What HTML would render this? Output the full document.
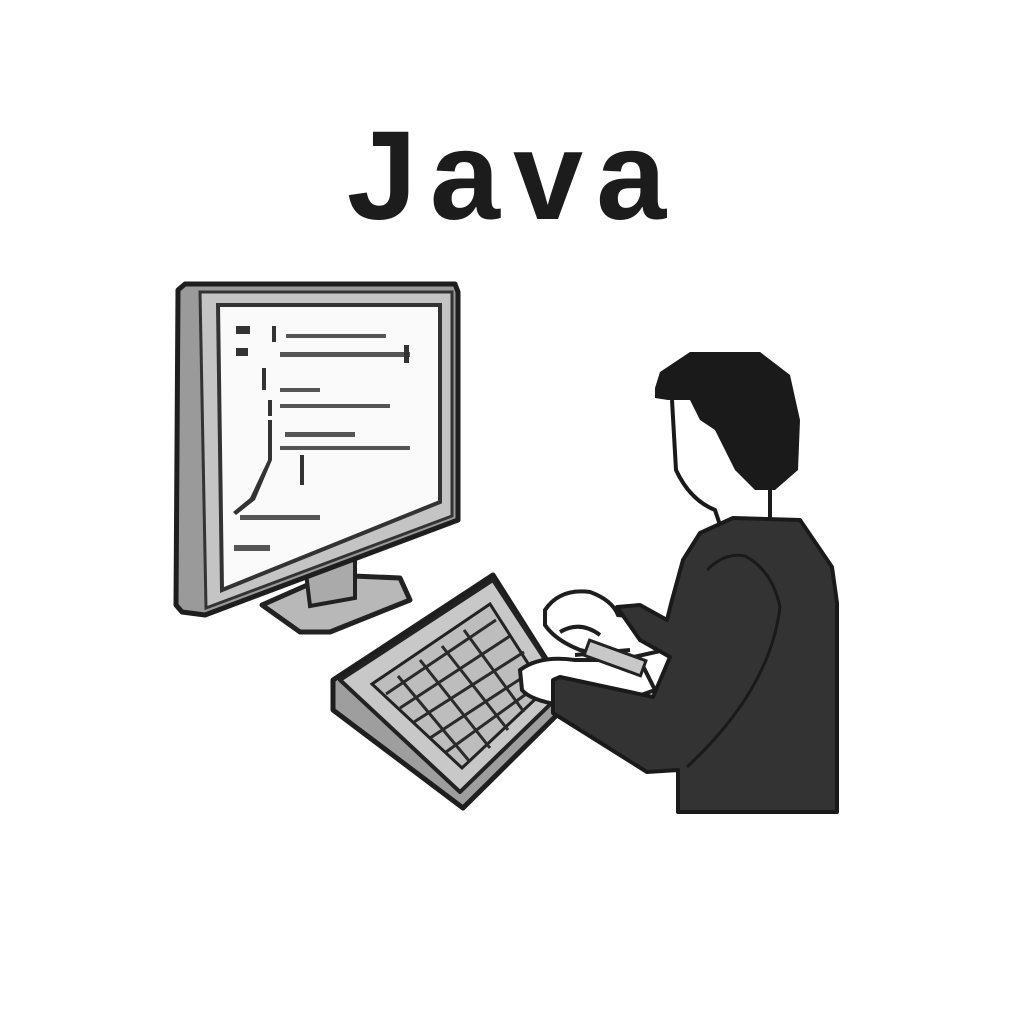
<!DOCTYPE html>
<html><head><meta charset="utf-8"><style>
html,body{margin:0;padding:0;background:#fff;width:1024px;height:1024px;overflow:hidden;position:relative}
.t{position:absolute;left:0;width:1024px;top:106px;text-align:center;font-family:"Liberation Sans","DejaVu Sans",Arial,Helvetica,sans-serif;font-weight:700;font-size:126px;line-height:140px;letter-spacing:13px;text-indent:2px;color:#1c1c1c}
svg{position:absolute;left:0;top:0}
</style></head><body>
<div class="t">Java</div>
<svg width="1024" height="1024" viewBox="0 0 1024 1024" xmlns="http://www.w3.org/2000/svg">
<polygon points="262,605 330,575 400,578 410,600 330,632 300,632" fill="#b8b8b8" stroke="#222" stroke-width="5" stroke-linejoin="round"/>
<polygon points="305,565 355,560 355,598 310,606" fill="#aaa" stroke="#222" stroke-width="4"/>
<polygon points="178,290 185,284 455,284 458,292 458,520 205,615 182,612 176,605" fill="#9a9a9a" stroke="#1e1e1e" stroke-width="5" stroke-linejoin="round"/>
<polygon points="200,292 452,292 452,516 206,608" fill="#c4c4c4" stroke="#333" stroke-width="3"/>
<polygon points="218,305 440,305 440,502 222,590" fill="#fafafa" stroke="#333" stroke-width="4"/>
<g fill="#333">
<rect x="236" y="326" width="14" height="8"/><rect x="236" y="348" width="12" height="8"/>
<rect x="272" y="326" width="4" height="16"/>
<rect x="286" y="334" width="100" height="4" fill="#555"/>
<rect x="280" y="352" width="130" height="5" fill="#555"/>
<rect x="404" y="345" width="5" height="18"/>
<rect x="262" y="368" width="4" height="22"/>
<rect x="280" y="388" width="40" height="4" fill="#555"/>
<rect x="268" y="400" width="4" height="16"/>
<rect x="280" y="404" width="110" height="4" fill="#555"/>
<rect x="268" y="420" width="4" height="40"/>
<rect x="285" y="432" width="70" height="5" fill="#555"/>
<rect x="280" y="446" width="130" height="4" fill="#555"/>
<rect x="300" y="455" width="4" height="30"/>
<polygon points="268,460 272,460 255,500 236,515 233,512 250,498"/>
<rect x="240" y="515" width="80" height="5" fill="#555"/>
<rect x="234" y="545" width="36" height="6" fill="#555"/>
</g>
<polygon points="333,680 493,575 572,700 463,808 333,710" fill="#9e9e9e" stroke="#1e1e1e" stroke-width="5" stroke-linejoin="round"/>
<polygon points="340,680 493,580 565,690 460,792" fill="#c8c8c8" stroke="#222" stroke-width="4" stroke-linejoin="round"/>
<polygon points="372,684 490,604 545,690 462,768" fill="#bdbdbd" stroke="#222" stroke-width="3"/>
<g stroke="#2a2a2a" stroke-width="3" fill="none">
<path d="M386,694 L496,620 M400,708 L510,636 M414,722 L524,652 M430,738 L534,670 M446,752 L540,684"/>
<path d="M398,676 L470,762 M420,660 L490,748 M442,646 L508,730 M464,630 L524,712"/>
</g>
<path d="M545,610 Q560,588 590,592 Q612,600 618,615 L660,620 L665,650 L620,660 L580,650 Q555,640 545,625 Z" fill="#fff" stroke="#1e1e1e" stroke-width="4"/>
<path d="M560,632 Q580,620 600,635 M575,655 L630,650" stroke="#1e1e1e" stroke-width="4" fill="none"/>
<path d="M520,670 Q540,655 575,660 L640,660 L655,690 L600,710 L560,705 Q530,700 522,690 Z" fill="#fff" stroke="#1e1e1e" stroke-width="4"/>
<rect x="585" y="650" width="60" height="16" fill="#c8c8c8" stroke="#222" stroke-width="3" transform="rotate(20 615 658)"/>
<path d="M733,518 L800,520 L832,567 L837,603 L837,812 L678,812 L678,770 L647,772 L553,713 L553,680 L560,677 L653,697 L670,657 L640,640 L617,607 L640,605 L667,620 L672,600 L683,560 L700,533 Z" fill="#333" stroke="#1a1a1a" stroke-width="4" stroke-linejoin="round"/>
<path d="M707,570 Q725,552 745,556 Q772,570 780,607 Q770,690 687,767" fill="none" stroke="#1a1a1a" stroke-width="3"/>
<path d="M672,400 L676,470 Q690,500 715,510 L720,525" fill="none" stroke="#1a1a1a" stroke-width="4"/>
<path d="M770,485 L770,520" stroke="#1a1a1a" stroke-width="4"/>
<path d="M655,388 L660,372 L690,352 L760,352 L790,375 L800,420 L798,470 L775,490 L755,490 L735,470 L715,430 L700,420 L690,400 L668,400 L655,398 Z" fill="#1a1a1a"/>
</svg>
</body></html>
